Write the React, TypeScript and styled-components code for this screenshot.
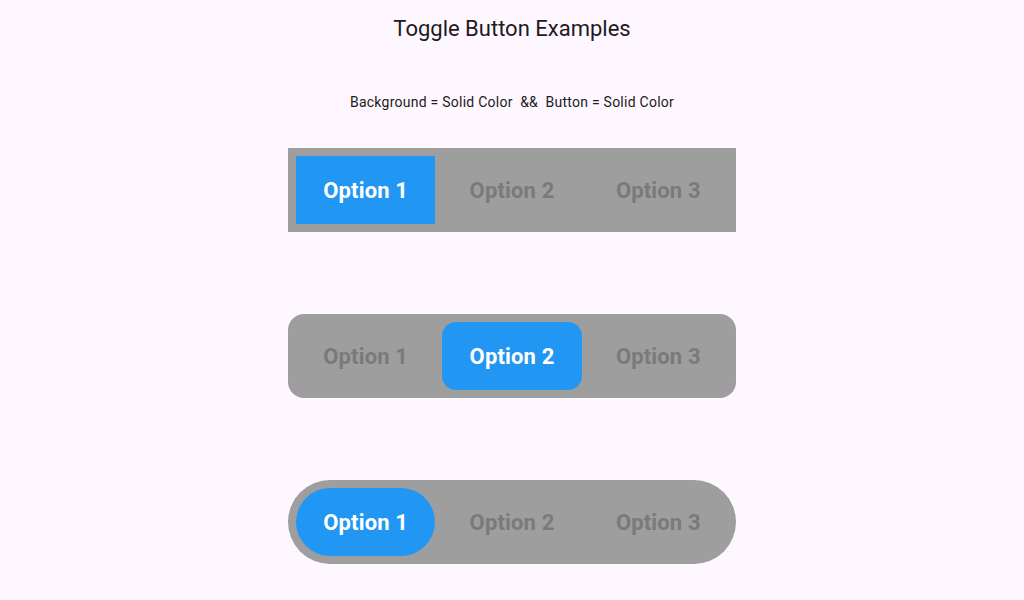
import React, { useState } from "react";
import styled, { createGlobalStyle } from "styled-components";

const Global = createGlobalStyle`
  html, body { margin: 0; padding: 0; background: #fef7ff; }
  body { font-family: Roboto, "Noto Sans", sans-serif; }
`;

const Page = styled.div`
  width: 1024px;
  height: 600px;
  background: #fef7ff;
  display: flex;
  flex-direction: column;
  overflow: hidden;
`;

const AppBar = styled.header`
  height: 56px;
  display: flex;
  align-items: center;
  justify-content: center;
  font-size: 22px;
  color: #1d1b20;
`;

const Body = styled.main`
  display: flex;
  flex-direction: column;
  align-items: center;
  padding-top: 36px;
`;

const Caption = styled.div`
  font-size: 14px;
  line-height: 20px;
  letter-spacing: 0.25px;
  color: #1d1b20;
  white-space: pre;
  margin-bottom: 36px;
`;

const Toggles = styled.div`
  display: flex;
  flex-direction: column;
  gap: 82px;
`;

const Track = styled.div<{ $radius: number }>`
  width: 448px;
  height: 84px;
  box-sizing: border-box;
  padding: 8px;
  background: #9e9e9e;
  border-radius: ${(p) => p.$radius}px;
  display: flex;
  gap: 7px;
`;

const Option = styled.button<{ $active: boolean; $radius: number }>`
  flex: 1;
  border: none;
  margin: 0;
  padding: 0;
  font-family: Roboto, sans-serif;
  font-size: 22px;
  font-weight: 700;
  letter-spacing: 0.15px;
  cursor: pointer;
  border-radius: ${(p) => p.$radius}px;
  background: ${(p) => (p.$active ? "#2196f3" : "transparent")};
  color: ${(p) => (p.$active ? "#ffffff" : "#7a7a7a")};
`;

const options = ["Option 1", "Option 2", "Option 3"];

function Toggle({
  initial,
  trackRadius,
  buttonRadius,
}: {
  initial: number;
  trackRadius: number;
  buttonRadius: number;
}) {
  const [sel, setSel] = useState(initial);
  return (
    <Track $radius={trackRadius}>
      {options.map((o, i) => (
        <Option
          key={o}
          $active={sel === i}
          $radius={buttonRadius}
          onClick={() => setSel(i)}
        >
          {o}
        </Option>
      ))}
    </Track>
  );
}

export default function App() {
  return (
    <Page>
      <Global />
      <AppBar>Toggle Button Examples</AppBar>
      <Body>
        <Caption>Background = Solid Color  &&  Button = Solid Color</Caption>
        <Toggles>
          <Toggle initial={0} trackRadius={0} buttonRadius={0} />
          <Toggle initial={1} trackRadius={16} buttonRadius={14} />
          <Toggle initial={0} trackRadius={42} buttonRadius={34} />
        </Toggles>
      </Body>
    </Page>
  );
}
